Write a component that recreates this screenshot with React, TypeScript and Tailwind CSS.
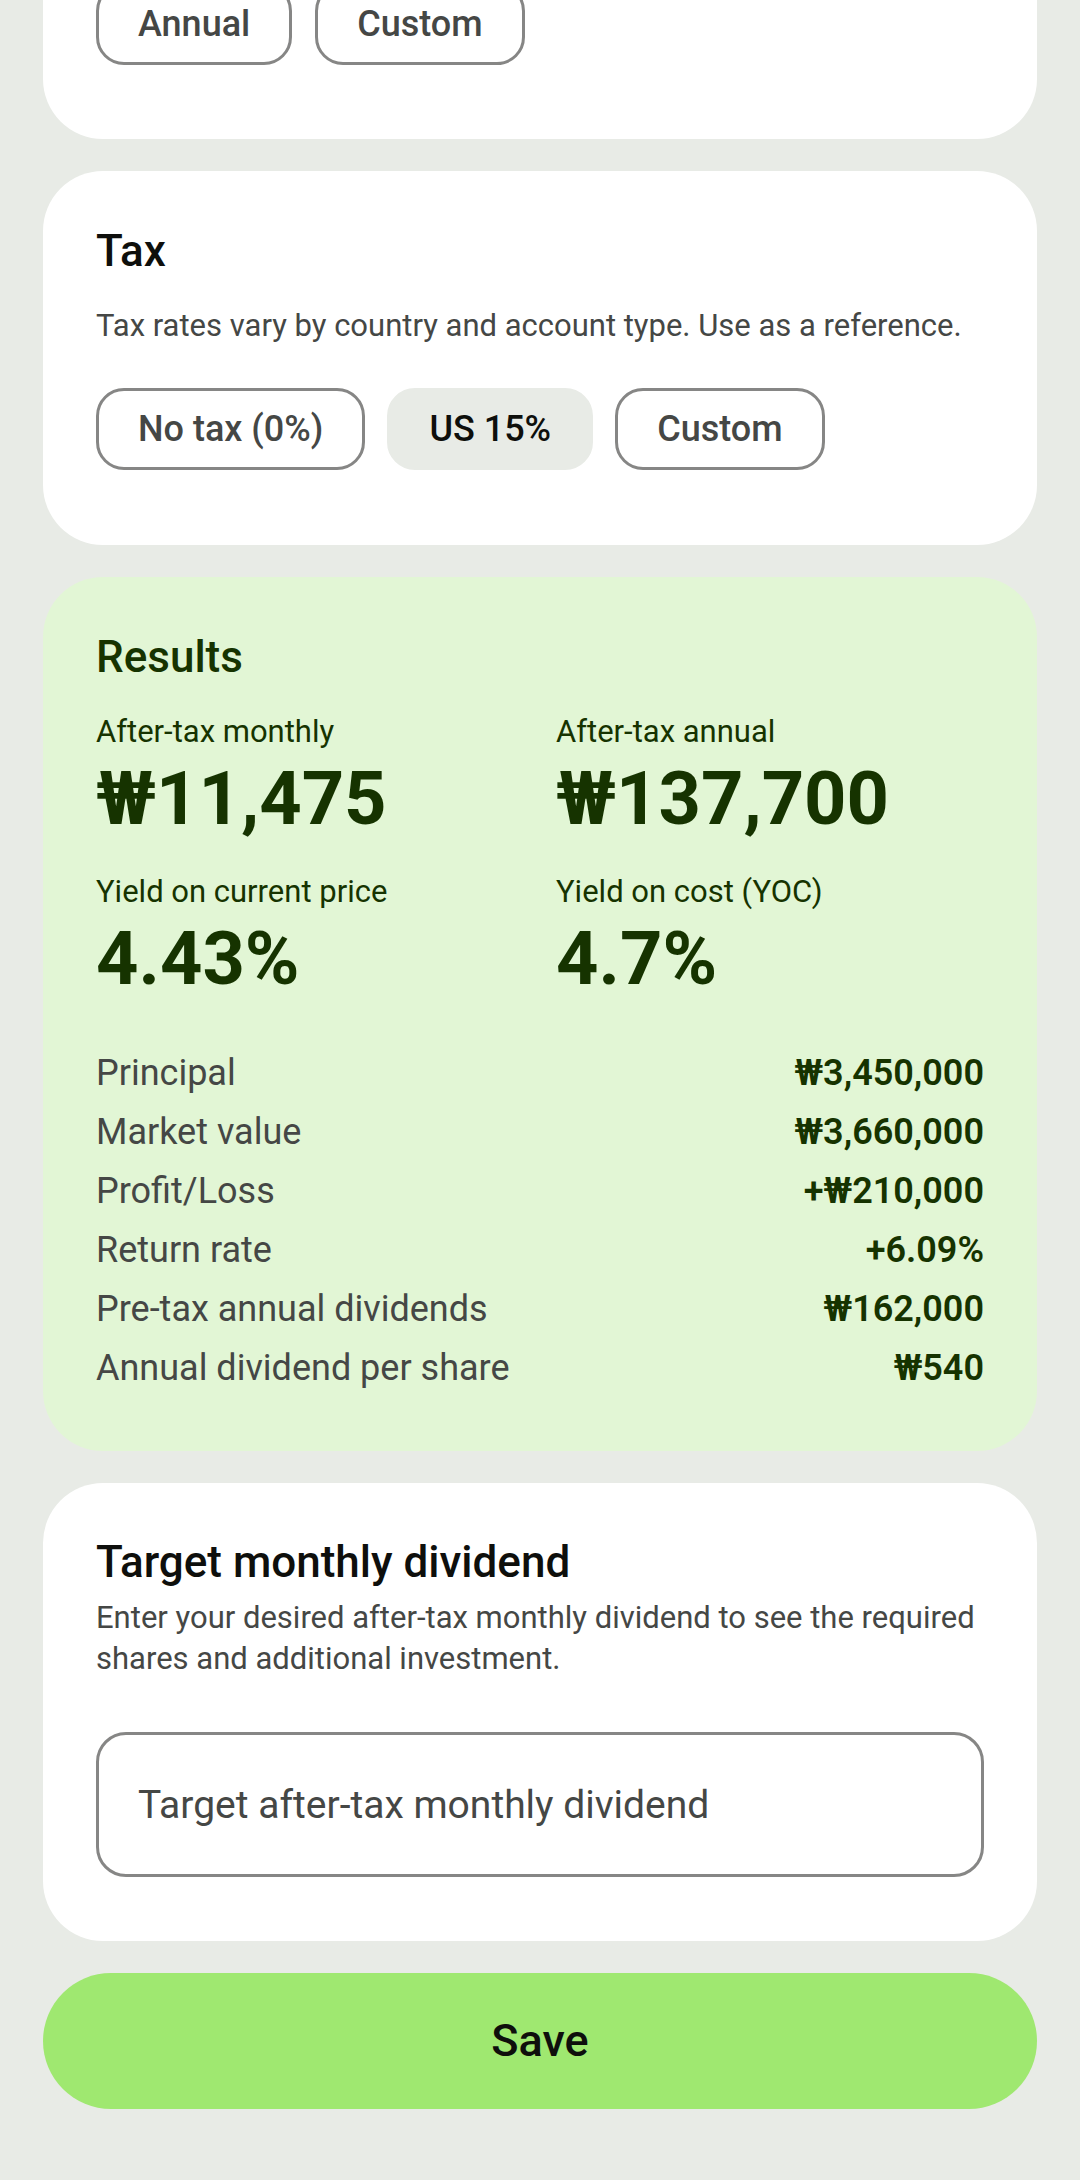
import React from 'react';

const font = { fontFamily: 'Roboto, "Noto Sans", sans-serif' };

interface ChipProps {
  label: string;
  selected?: boolean;
}

function Chip({ label, selected = false }: ChipProps) {
  return (
    <button
      type="button"
      className={
        selected
          ? 'h-[82px] px-[39px] rounded-[28px] border-[3px] border-[#e8ebe6] bg-[#e8ebe6] text-[36px] leading-[44px] font-medium text-[#0e0f0c]'
          : 'h-[82px] px-[39px] rounded-[28px] border-[3px] border-[#868685] bg-white text-[36px] leading-[44px] font-medium text-[#454745]'
      }
    >
      {label}
    </button>
  );
}

const stats = [
  { label: 'Principal', value: '₩3,450,000' },
  { label: 'Market value', value: '₩3,660,000' },
  { label: 'Profit/Loss', value: '+₩210,000' },
  { label: 'Return rate', value: '+6.09%' },
  { label: 'Pre-tax annual dividends', value: '₩162,000' },
  { label: 'Annual dividend per share', value: '₩540' },
];

const highlights = [
  { label: 'After-tax monthly', value: '₩11,475' },
  { label: 'After-tax annual', value: '₩137,700' },
  { label: 'Yield on current price', value: '4.43%' },
  { label: 'Yield on cost (YOC)', value: '4.7%' },
];

export default function App() {
  return (
    <div style={font} className="w-[1080px] h-[2180px] overflow-hidden bg-[#e8ebe6] px-[43px] flex flex-col gap-[32px]">
      {/* Period card (scrolled, only bottom visible) */}
      <section className="-mt-[72px] bg-white rounded-[60px] px-[53px] pt-[55px] pb-[74px]">
        <div className="flex gap-[23px]">
          <Chip label="Annual" />
          <Chip label="Custom" />
        </div>
      </section>

      {/* Tax */}
      <section className="bg-white rounded-[60px] px-[53px] pt-[55px] pb-[75px]">
        <h2 className="text-[44px] leading-[50px] font-medium text-[#0e0f0c]">Tax</h2>
        <p className="mt-[30px] text-[31px] leading-[40px] text-[#454745]">
          Tax rates vary by country and account type. Use as a reference.
        </p>
        <div className="mt-[42px] flex gap-[22px]">
          <Chip label="No tax (0%)" />
          <Chip label="US 15%" selected />
          <Chip label="Custom" />
        </div>
      </section>

      {/* Results */}
      <section className="bg-[#e2f6d5] rounded-[60px] px-[53px] pt-[55px] pb-[53px] text-[#163300]">
        <h2 className="text-[44px] leading-[50px] font-medium">Results</h2>
        <div className="mt-[30px] grid grid-cols-2 gap-x-[32px] gap-y-[26px]">
          {highlights.map((h) => (
            <div key={h.label}>
              <p className="text-[31px] leading-[40px]">{h.label}</p>
              <p className="text-[74px] leading-[94px] font-bold">{h.value}</p>
            </div>
          ))}
        </div>
        <div className="mt-[38px] flex flex-col">
          {stats.map((s) => (
            <div key={s.label} className="flex items-center justify-between h-[59px]">
              <span className="text-[36px] leading-[59px] text-[#454745]">{s.label}</span>
              <span className="text-[36px] leading-[59px] font-semibold">{s.value}</span>
            </div>
          ))}
        </div>
      </section>

      {/* Target */}
      <section className="bg-white rounded-[60px] px-[53px] pt-[54px] pb-[64px]">
        <h2 className="text-[44px] leading-[50px] font-medium text-[#0e0f0c]">Target monthly dividend</h2>
        <p className="mt-[10px] text-[31px] leading-[41px] text-[#454745]">
          Enter your desired after-tax monthly dividend to see the required shares and additional investment.
        </p>
        <input
          type="text"
          placeholder="Target after-tax monthly dividend"
          className="mt-[53px] w-full h-[145px] rounded-[30px] border-[3px] border-[#868685] px-[39px] text-[39px] text-[#0e0f0c] placeholder:text-[#454745] outline-none bg-white"
        />
      </section>

      <button
        type="button"
        className="h-[136px] w-full rounded-full bg-[#9fe870] text-[45px] font-medium text-[#0e0f0c]"
      >
        Save
      </button>
    </div>
  );
}
